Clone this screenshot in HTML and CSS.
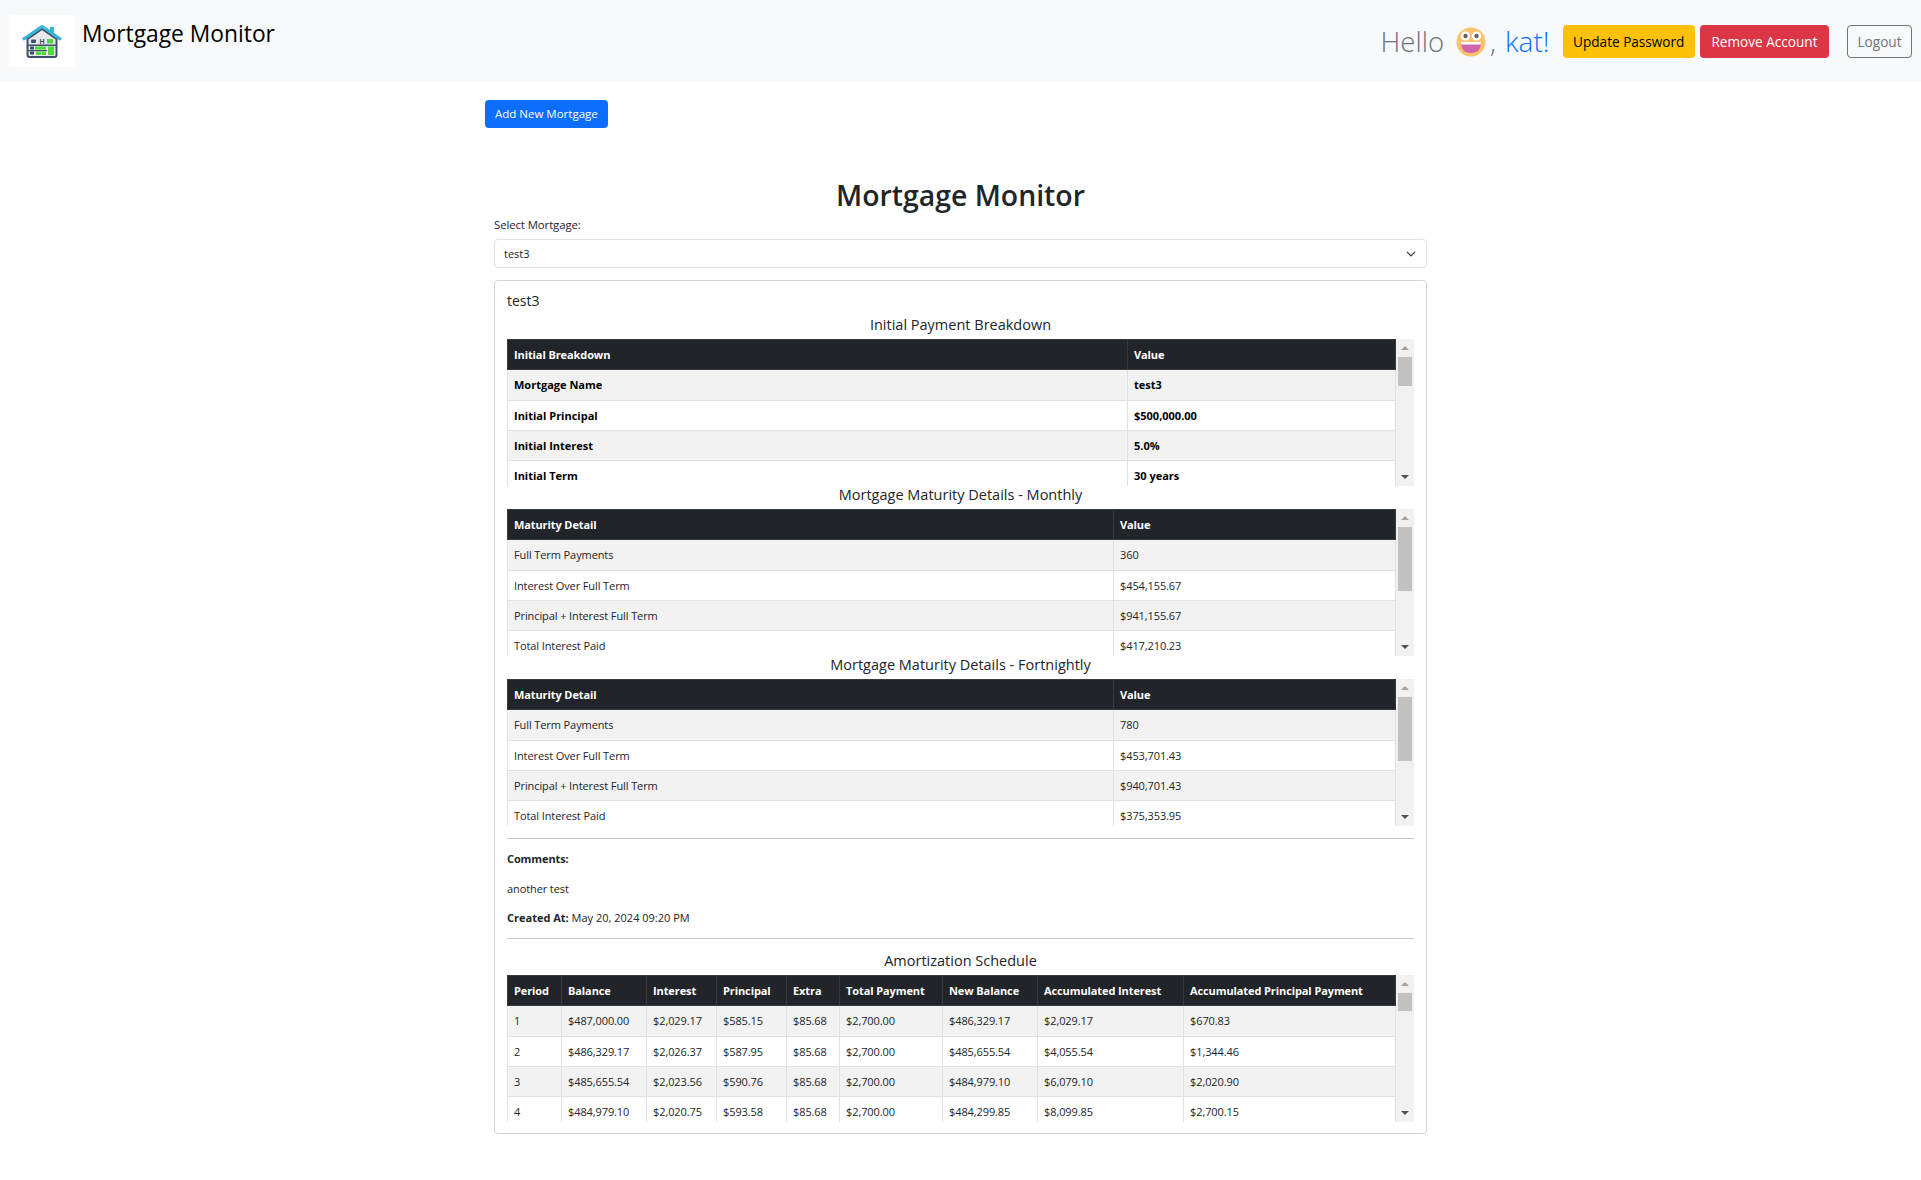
FILE: index.html
```html
<!DOCTYPE html>
<html lang="en">
<head>
    <meta charset="UTF-8">
    <meta name="viewport" content="width=device-width, initial-scale=1.0">
    <title>Mortgage Monitor</title>
    <link rel="stylesheet" href="styles.css">
</head>
<body>
    <nav class="navbar">
        <div class="brand">
            <div class="brand-logo">
                <svg width="54" height="44" viewBox="0 0 54 44">
                    <rect x="35" y="8" width="4" height="8" fill="#35b4d8"/>
                    <path d="M12.5 20 L27 10 L41.5 20 V36 Q41.5 38 39.5 38 H14.5 Q12.5 38 12.5 36 Z" fill="#e6eaed" stroke="#3d5068" stroke-width="2"/>
                    <path d="M8 20.5 L27 7.5 L46 20.5" fill="none" stroke="#35b4d8" stroke-width="3" stroke-linejoin="round"/>
                    <rect x="13" y="25.5" width="28" height="1.5" fill="#3d5068"/>
                    <rect x="13" y="31" width="19" height="1.2" fill="#3d5068"/>
                    <rect x="16" y="20.5" width="5" height="3.5" rx="1" fill="#3d5068"/>
                    <text class="logo-letter" x="27" y="24.5">H</text>
                    <rect x="32" y="20" width="6" height="4.5" fill="#4fd83f"/>
                    <rect x="20" y="27.5" width="11" height="3" fill="#4fd83f"/>
                    <rect x="15" y="27.5" width="4" height="3" fill="#3d5068"/>
                    <rect x="33" y="27.5" width="6" height="8.5" fill="#4fd83f"/>
                    <rect x="21" y="32.5" width="5" height="3.5" fill="#4fd83f"/>
                    <rect x="27" y="32.5" width="4" height="3.5" fill="#4fd83f"/>
                    <rect x="15" y="32.5" width="4" height="3" fill="#3d5068"/>
                </svg>
            </div>
            <span class="brand-name">Mortgage Monitor</span>
        </div>
        <div class="nav-right">
            <span class="hello">
                <span class="hello-grey hello-word">Hello</span>
                <svg class="emoji" width="30" height="30" viewBox="0 0 30 30">
                    <circle cx="15" cy="15" r="14.5" fill="#fdc36b"/>
                    <circle cx="9.5" cy="9" r="4.6" fill="#fff"/>
                    <circle cx="20.5" cy="9" r="4.6" fill="#fff"/>
                    <circle cx="9.5" cy="9" r="2.2" fill="#6e5b5b"/>
                    <circle cx="20.5" cy="9" r="2.2" fill="#6e5b5b"/>
                    <path d="M5 15 H25 Q25 26 15 26 Q5 26 5 15 Z" fill="#d165ac"/>
                    <path d="M5 15 H25 L24.6 17.5 H5.4 Z" fill="#fff"/>
                </svg>
                <span class="hello-grey">,</span>
                <span class="hello-blue">kat!</span>
            </span>
            <button class="btn btn-warning">Update Password</button>
            <button class="btn btn-danger">Remove Account</button>
            <button class="btn btn-logout">Logout</button>
        </div>
    </nav>

    <div class="container">
        <button class="btn btn-add">Add New Mortgage</button>

        <div class="content">
            <h2 class="page-title">Mortgage Monitor</h2>
            <label class="select-label" for="mortgage">Select Mortgage:</label>
            <select class="mortgage-select" id="mortgage">
                <option>test3</option>
            </select>

            <div class="card">
                <div class="card-title">test3</div>

                <div class="table-title">Initial Payment Breakdown</div>
                <div class="table-scroll">
                    <div class="table-clip">
                        <table class="breakdown">
                            <colgroup><col class="col-breakdown"><col></colgroup>
                            <thead>
                                <tr><th>Initial Breakdown</th><th>Value</th></tr>
                            </thead>
                            <tbody>
                                <tr><td>Mortgage Name</td><td>test3</td></tr>
                                <tr><td>Initial Principal</td><td>$500,000.00</td></tr>
                                <tr><td>Initial Interest</td><td>5.0%</td></tr>
                                <tr><td>Initial Term</td><td>30 years</td></tr>
                            </tbody>
                        </table>
                    </div>
                    <div class="scrollbar">
                        <span class="arrow arrow-up"></span>
                        <span class="thumb thumb-breakdown"></span>
                        <span class="arrow arrow-down"></span>
                    </div>
                </div>

                <div class="table-title">Mortgage Maturity Details - Monthly</div>
                <div class="table-scroll">
                    <div class="table-clip">
                        <table>
                            <colgroup><col class="col-maturity"><col></colgroup>
                            <thead>
                                <tr><th>Maturity Detail</th><th>Value</th></tr>
                            </thead>
                            <tbody>
                                <tr><td>Full Term Payments</td><td>360</td></tr>
                                <tr><td>Interest Over Full Term</td><td>$454,155.67</td></tr>
                                <tr><td>Principal + Interest Full Term</td><td>$941,155.67</td></tr>
                                <tr><td>Total Interest Paid</td><td>$417,210.23</td></tr>
                            </tbody>
                        </table>
                    </div>
                    <div class="scrollbar">
                        <span class="arrow arrow-up"></span>
                        <span class="thumb thumb-maturity"></span>
                        <span class="arrow arrow-down"></span>
                    </div>
                </div>

                <div class="table-title">Mortgage Maturity Details - Fortnightly</div>
                <div class="table-scroll">
                    <div class="table-clip">
                        <table>
                            <colgroup><col class="col-maturity"><col></colgroup>
                            <thead>
                                <tr><th>Maturity Detail</th><th>Value</th></tr>
                            </thead>
                            <tbody>
                                <tr><td>Full Term Payments</td><td>780</td></tr>
                                <tr><td>Interest Over Full Term</td><td>$453,701.43</td></tr>
                                <tr><td>Principal + Interest Full Term</td><td>$940,701.43</td></tr>
                                <tr><td>Total Interest Paid</td><td>$375,353.95</td></tr>
                            </tbody>
                        </table>
                    </div>
                    <div class="scrollbar">
                        <span class="arrow arrow-up"></span>
                        <span class="thumb thumb-maturity"></span>
                        <span class="arrow arrow-down"></span>
                    </div>
                </div>

                <hr class="rule">
                <p class="comment-label"><strong>Comments:</strong></p>
                <p class="comment-text">another test</p>
                <p class="created"><strong>Created At:</strong> May 20, 2024 09:20 PM</p>
                <hr class="rule">

                <div class="table-title amort-title">Amortization Schedule</div>
                <div class="table-scroll">
                    <div class="table-clip">
                        <table>
                            <colgroup>
                                <col class="col-period"><col class="col-balance"><col class="col-interest">
                                <col class="col-principal"><col class="col-extra"><col class="col-total">
                                <col class="col-new"><col class="col-acc"><col>
                            </colgroup>
                            <thead>
                                <tr>
                                    <th>Period</th><th>Balance</th><th>Interest</th><th>Principal</th><th>Extra</th>
                                    <th>Total Payment</th><th>New Balance</th><th>Accumulated Interest</th><th>Accumulated Principal Payment</th>
                                </tr>
                            </thead>
                            <tbody>
                                <tr><td>1</td><td>$487,000.00</td><td>$2,029.17</td><td>$585.15</td><td>$85.68</td><td>$2,700.00</td><td>$486,329.17</td><td>$2,029.17</td><td>$670.83</td></tr>
                                <tr><td>2</td><td>$486,329.17</td><td>$2,026.37</td><td>$587.95</td><td>$85.68</td><td>$2,700.00</td><td>$485,655.54</td><td>$4,055.54</td><td>$1,344.46</td></tr>
                                <tr><td>3</td><td>$485,655.54</td><td>$2,023.56</td><td>$590.76</td><td>$85.68</td><td>$2,700.00</td><td>$484,979.10</td><td>$6,079.10</td><td>$2,020.90</td></tr>
                                <tr><td>4</td><td>$484,979.10</td><td>$2,020.75</td><td>$593.58</td><td>$85.68</td><td>$2,700.00</td><td>$484,299.85</td><td>$8,099.85</td><td>$2,700.15</td></tr>
                            </tbody>
                        </table>
                    </div>
                    <div class="scrollbar">
                        <span class="arrow arrow-up"></span>
                        <span class="thumb thumb-amort"></span>
                        <span class="arrow arrow-down"></span>
                    </div>
                </div>
            </div>
        </div>
    </div>
</body>
</html>
```

FILE: styles.css
```css
body {
    font-family: 'Open Sans', 'Noto Sans', sans-serif;
    font-size: 11px;
    letter-spacing: -0.1px;
    color: #212529;
    background-color: #fff;
    margin: 0;
    padding: 0;
}

.navbar {
    background-color: #f8f9fa;
    height: 82px;
    display: flex;
    justify-content: space-between;
    box-sizing: border-box;
    padding: 15px 9px 0 9px;
}

.brand {
    display: flex;
    align-items: flex-start;
}

.brand-logo {
    background-color: #fff;
    width: 66px;
    height: 52px;
    display: flex;
    justify-content: center;
    align-items: center;
}

.logo-letter {
    font-family: 'Liberation Sans', sans-serif;
    font-size: 7px;
    font-weight: 700;
    fill: #3d5068;
    text-anchor: middle;
}

.brand-name {
    font-size: 22.8px;
    letter-spacing: 0;
    line-height: 30px;
    margin-left: 7px;
    margin-top: 4px;
    color: #000;
}

.nav-right {
    display: flex;
    align-items: flex-start;
    padding-top: 10px;
}

.hello {
    font-size: 28px;
    font-weight: 300;
    letter-spacing: 0;
    line-height: 33px;
    display: flex;
    align-items: center;
    margin-right: 13px;
}

.hello-word {
    font-size: 27.5px;
}

.hello-grey {
    color: #6c757d;
}

.hello-blue {
    color: #0d6efd;
    margin-left: 9px;
}

.emoji {
    margin-left: 12px;
    margin-right: 4px;
}

.btn {
    font-family: inherit;
    font-size: 13.6px;
    letter-spacing: 0;
    height: 33px;
    padding: 0 9.5px;
    border: 1px solid transparent;
    border-radius: 4px;
    cursor: pointer;
}

.btn-warning {
    background-color: #ffc107;
    color: #000;
}

.btn-danger {
    background-color: #dc3545;
    color: #fff;
    margin-left: 5px;
    padding: 0 10.5px;
}

.btn-logout {
    background-color: transparent;
    border-color: #6c757d;
    color: #6c757d;
    margin-left: 18px;
}

.container {
    width: 951px;
    margin: 18px auto 0 auto;
}

.btn-add {
    background-color: #0d6efd;
    color: #fff;
    font-size: 11.5px;
    height: 28px;
    padding: 0 9px 2px 9px;
    display: block;
}

.content {
    padding: 0 9px;
}

.page-title {
    font-size: 28.4px;
    font-weight: 600;
    letter-spacing: 0;
    line-height: 34px;
    text-align: center;
    margin: 50px 0 0 0;
}

.select-label {
    display: block;
    font-size: 11.4px;
    line-height: 18px;
    margin-top: 4px;
    margin-bottom: 5px;
}

.mortgage-select {
    display: block;
    width: 100%;
    height: 29px;
    box-sizing: border-box;
    padding: 0 9px;
    font-family: inherit;
    font-size: 11px;
    color: #212529;
    border: 1px solid #dee2e6;
    border-radius: 4px;
    appearance: none;
    background: #fff url("data:image/svg+xml,%3csvg xmlns='http://www.w3.org/2000/svg' viewBox='0 0 16 16'%3e%3cpath fill='none' stroke='%23343a40' stroke-linecap='round' stroke-linejoin='round' stroke-width='2' d='m2 5 6 6 6-6'/%3e%3c/svg%3e") no-repeat right 10px center / 10px 10px;
}

.card {
    margin-top: 12px;
    border: 1px solid #d3d4d6;
    border-radius: 4px;
    padding: 12px 12px 11px 12px;
}

.card-title {
    font-size: 14px;
    letter-spacing: 0;
    line-height: 15px;
    margin-bottom: 8px;
}

.table-title {
    font-size: 14.5px;
    letter-spacing: 0;
    line-height: 18px;
    margin-bottom: 5px;
    text-align: center;
}

.amort-title {
    margin-top: 13px;
}

.table-scroll {
    height: 147px;
    display: flex;
}

.table-clip {
    flex: 1;
    overflow: hidden;
}

.scrollbar {
    width: 18px;
    background-color: #f1f1f1;
    display: flex;
    flex-direction: column;
}

.thumb {
    background-color: #c1c1c1;
    margin: 0 2px;
}

.thumb-breakdown { height: 29px; }
.thumb-maturity { height: 64px; }
.thumb-amort { height: 18px; }

.arrow {
    height: 18px;
    display: flex;
    justify-content: center;
    align-items: center;
}

.arrow-down {
    margin-top: auto;
}

.arrow::before {
    content: '';
    border-left: 4px solid transparent;
    border-right: 4px solid transparent;
}

.arrow-up::before {
    border-bottom: 4px solid #a3a3a3;
}

.arrow-down::before {
    border-top: 4px solid #505050;
}

table {
    width: 100%;
    table-layout: fixed;
    border-collapse: collapse;
}

th, td {
    height: 30.3px;
    box-sizing: border-box;
    padding: 0 6px;
    text-align: left;
    white-space: nowrap;
    overflow: hidden;
}

th {
    background-color: #212529;
    color: #fff;
    font-weight: 700;
    border: 1px solid #373b3e;
}

td {
    border: 1px solid #dee2e6;
}

tbody tr:nth-child(odd) td {
    background-color: #f2f2f2;
}

.breakdown td {
    font-weight: 700;
    letter-spacing: 0;
    color: #000;
}

.col-breakdown { width: 620px; }
.col-maturity { width: 606px; }
.col-period { width: 54px; }
.col-balance { width: 85px; }
.col-interest { width: 70px; }
.col-principal { width: 70px; }
.col-extra { width: 53px; }
.col-total { width: 103px; }
.col-new { width: 95px; }
.col-acc { width: 146px; }

.rule {
    border: 0;
    border-top: 1px solid #c8c9ca;
    margin: 12px 0 11px 0;
}

.comment-label, .comment-text, .created {
    line-height: 18px;
    margin: 0;
}

.comment-label {
    margin-bottom: 12px;
}

.comment-text {
    margin-bottom: 11px;
}

.created {
    letter-spacing: 0;
}

.created + .rule {
    margin-top: 11px;
    margin-bottom: 0;
}
```
